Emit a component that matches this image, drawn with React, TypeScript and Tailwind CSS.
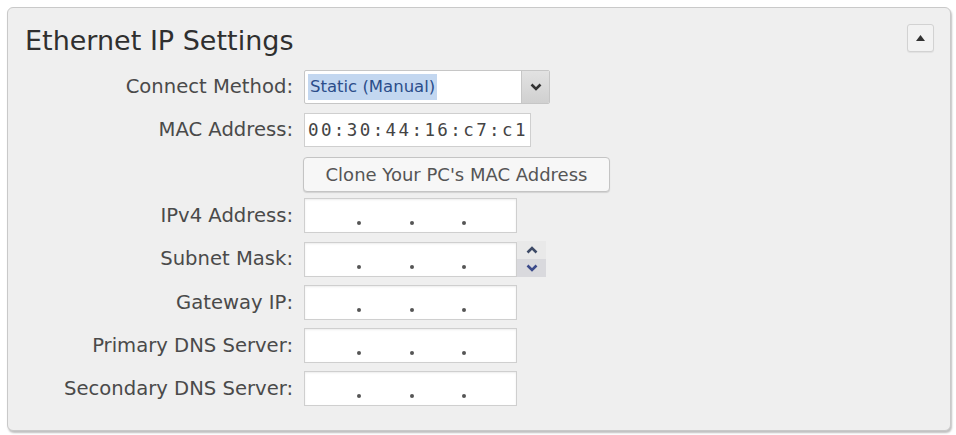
import React from "react";

const font = { fontFamily: '"DejaVu Sans", Verdana, sans-serif' };

function Label({ children }: { children: React.ReactNode }) {
  return (
    <div className="w-[286px] shrink-0 text-right text-[19.6px] leading-[24px] text-[#4a4a4a] pr-[1px]">{children}</div>
  );
}

function IpField() {
  return (
    <div className="relative w-[213px] h-[35px] bg-white border border-[#cfcfcf] shadow-[inset_0_1px_2px_rgba(0,0,0,0.08)]">
      <span className="absolute left-[52px] top-[22px] w-[4px] h-[4px] rounded-full bg-[#555]" />
      <span className="absolute left-[105px] top-[22px] w-[4px] h-[4px] rounded-full bg-[#555]" />
      <span className="absolute left-[157px] top-[22px] w-[4px] h-[4px] rounded-full bg-[#555]" />
    </div>
  );
}

function Row({ label, children, className = "" }: { label?: string; children: React.ReactNode; className?: string }) {
  return (
    <div className={"flex items-center gap-[10px] " + className}>
      <Label>{label}</Label>
      {children}
    </div>
  );
}

export default function App() {
  return (
    <div className="w-[956px] h-[435px] bg-white pt-[7px] pl-[7px]" style={font}>
      <div className="relative w-[944px] h-[424px] bg-[#efefef] border border-[#c9c9c9] rounded-[6px] shadow-[1px_2px_2px_rgba(0,0,0,0.25)]">
        <button className="absolute left-[899px] top-[16px] w-[27px] h-[28px] border border-[#d2d2d2] rounded-[3px] bg-[#f2f2f2] flex items-center justify-center shadow-[0_1px_1px_rgba(0,0,0,0.06)]">
          <svg width="9" height="6" viewBox="0 0 9 6"><path d="M4.5 0 L9 6 L0 6 Z" fill="#333" /></svg>
        </button>
        <div className="pl-[17px] pt-[16px] text-[27px] leading-[34px] text-[#2f2f2f]">Ethernet IP Settings</div>
        <div className="flex flex-col mt-[12px]">
          <Row label="Connect Method:">
            <div className="flex w-[246px] h-[34px] border border-[#c6c6c6] rounded-[2px] bg-white overflow-hidden">
              <div className="flex-1 flex items-center pl-[3px]">
                <span className="bg-[#c3d7f0] text-[#2b4d8a] text-[16.5px] leading-[26px] px-[2px]">Static (Manual)</span>
              </div>
              <div className="w-[28px] bg-gradient-to-b from-[#e2e2e2] to-[#d0d0d0] border-l border-[#c6c6c6] flex items-center justify-center">
                <svg width="12" height="8" viewBox="0 0 12 8"><path d="M1.5 1.5 L6 6 L10.5 1.5" stroke="#333" strokeWidth="2.6" fill="none" /></svg>
              </div>
            </div>
          </Row>
          <Row label="MAC Address:" className="mt-[9px]">
            <div className="w-[227px] h-[34px] bg-white border border-[#cfcfcf] flex items-center pl-[3px] text-[17.5px] text-[#444]" style={{ fontFamily: '"DejaVu Sans Mono", monospace', letterSpacing: "2.4px" }}>
              00:30:44:16:c7:c1
            </div>
          </Row>
          <Row className="mt-[10px]">
            <button className="w-[307px] h-[35px] border border-[#c4c4c4] rounded-[4px] bg-[#f7f7f7] text-[18px] text-[#555] shadow-[0_1px_1px_rgba(0,0,0,0.12)] -ml-[1px]">
              Clone Your PC's MAC Address
            </button>
          </Row>
          <Row label="IPv4 Address:" className="mt-[6px]"><IpField /></Row>
          <Row label="Subnet Mask:" className="mt-[8px]">
            <div className="flex items-center">
              <IpField />
              <div className="w-[29px] h-[36px] flex flex-col">
                <div className="flex-1 bg-[#e9e9e9] flex items-center justify-center">
                  <svg width="12" height="8" viewBox="0 0 12 8"><path d="M1.5 6.5 L6 2 L10.5 6.5" stroke="#3d4a66" strokeWidth="2.6" fill="none" /></svg>
                </div>
                <div className="flex-1 bg-[#d9d9dd] flex items-center justify-center">
                  <svg width="12" height="8" viewBox="0 0 12 8"><path d="M1.5 1.5 L6 6 L10.5 1.5" stroke="#3b4a8a" strokeWidth="2.6" fill="none" /></svg>
                </div>
              </div>
            </div>
          </Row>
          <Row label="Gateway IP:" className="mt-[8px]"><IpField /></Row>
          <Row label="Primary DNS Server:" className="mt-[8px]"><IpField /></Row>
          <Row label="Secondary DNS Server:" className="mt-[8px]"><IpField /></Row>
        </div>
      </div>
    </div>
  );
}
